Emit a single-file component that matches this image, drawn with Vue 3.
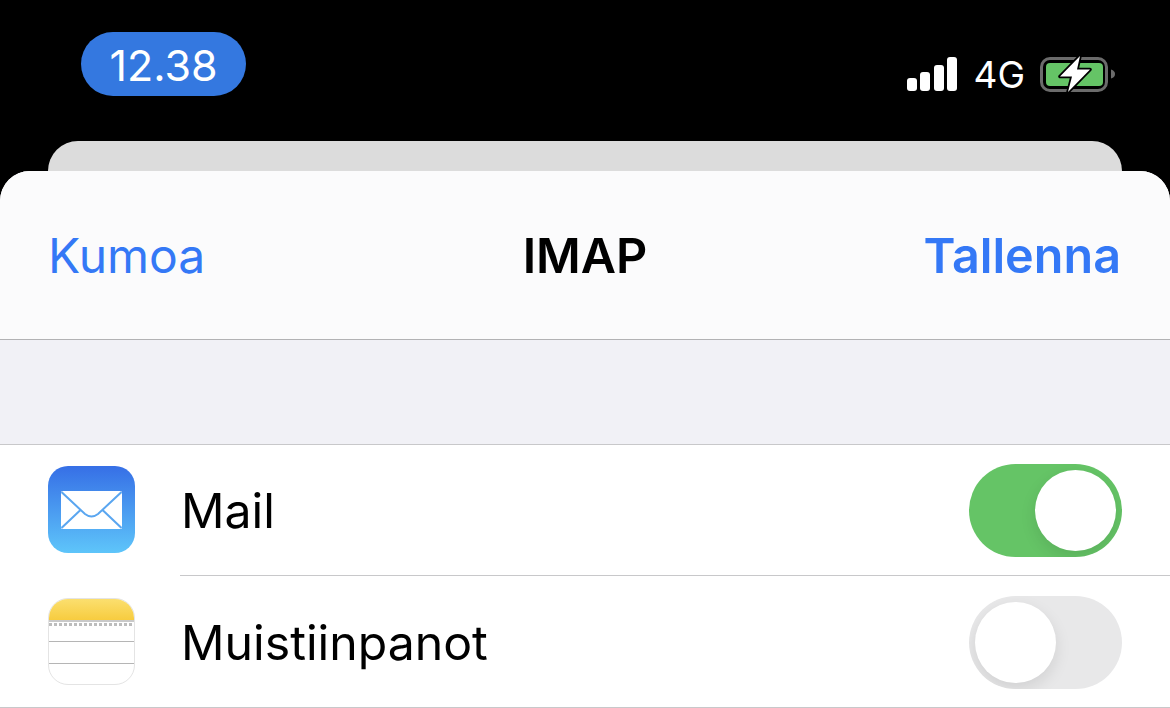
<template>
  <div class="screen">
    <!-- status bar -->
    <div class="status">
      <div class="clock">12.38</div>
      <div class="status-right">
        <div class="signal">
          <span v-for="h in bars" :key="h" class="signal-bar" :style="{ height: h + 'px' }" />
        </div>
        <span class="net">4G</span>
        <svg class="battery" width="76" height="38" viewBox="0 0 76 38">
          <rect x="1.500" y="3.500" width="65" height="32" rx="8.500" fill="none" stroke="#6b6b6b" stroke-width="3" />
          <rect x="6" y="8" width="57" height="23" rx="4" fill="#65c466" />
          <path d="M71 14.500 C74 15.500 75 17 75 19 C75 21 74 22.500 71 23.500 Z" fill="#6b6b6b" />
          <path d="M40 1 L20 21.500 L32 21.500 L28 37 L50 14.500 L37 14.500 Z" fill="#fff" stroke="#000" stroke-width="3.500" stroke-linejoin="round" paint-order="stroke" />
        </svg>
      </div>
    </div>

    <div class="back-card" />

    <div class="sheet">
      <div class="nav">
        <span class="nav-btn">Kumoa</span>
        <span class="nav-title">IMAP</span>
        <span class="nav-btn strong">Tallenna</span>
      </div>
      <div class="spacer" />
      <div class="list">
        <div class="row">
          <div class="app-icon mail">
            <svg width="61" height="38" viewBox="0 0 61 38">
              <rect width="61" height="38" rx="1.500" fill="#fff" />
              <path d="M0.500 1 L24 23 Q30.500 28 37 23 L60.500 1 M0.500 37 L20 18.500 M60.500 37 L41 18.500" fill="none" stroke="#5aa6f0" stroke-width="2" />
            </svg>
          </div>
          <span class="label">Mail</span>
          <div class="toggle on"><span class="knob" /></div>
        </div>
        <div class="row">
          <div class="app-icon notes">
            <div class="notes-head" />
            <div class="notes-dots" />
            <div class="notes-line first" />
            <div class="notes-line" />
          </div>
          <span class="label">Muistiinpanot</span>
          <div class="toggle"><span class="knob" /></div>
        </div>
      </div>
    </div>
  </div>
</template>

<script setup>
const bars = [13, 19, 26, 34]
</script>

<style>
html, body {
  margin: 0;
  background: #000;
}
</style>

<style scoped>
.screen {
  width: 1170px;
  height: 708px;
  overflow: hidden;
  background: #000;
  font-family: Inter, "Liberation Sans", sans-serif;
}

/* status bar */
.status {
  height: 141px;
  box-sizing: border-box;
  padding: 32px 54px 0 81px;
  display: flex;
  justify-content: space-between;
  align-items: flex-start;
}
.clock {
  width: 165px;
  height: 64px;
  border-radius: 32px;
  background: #3478e0;
  color: #fff;
  font-size: 43px;
  line-height: 66px;
  text-align: center;
}
.status-right {
  display: flex;
  align-items: center;
  margin-top: 21px;
  height: 42px;
}
.signal {
  display: flex;
  align-items: flex-end;
  gap: 3.670px;
  height: 34px;
}
.signal-bar {
  width: 10px;
  background: #fff;
  border-radius: 3px;
}
.net {
  color: #fff;
  font-size: 37px;
  margin-left: 16px;
  margin-right: 15px;
}

.back-card {
  height: 30px;
  margin: 0 48px;
  background: #dcdcdc;
  border-radius: 30px 30px 0 0;
}

.sheet {
  height: 537px;
  background: #fff;
  border-radius: 30px 30px 0 0;
  overflow: hidden;
}
.nav {
  height: 169px;
  box-sizing: border-box;
  padding: 0 49px 0 48px;
  background: #fbfbfc;
  border-bottom: 1px solid #b2b2b4;
  display: flex;
  align-items: center;
  justify-content: space-between;
  position: relative;
}
.nav-btn {
  color: #3478f6;
  font-size: 48px;
}
.nav-btn.strong {
  font-size: 48.500px;
  font-weight: 600;
}
.nav-title {
  position: absolute;
  left: 0;
  right: 0;
  text-align: center;
  font-size: 48.500px;
  font-weight: 600;
  color: #000;
}
.spacer {
  height: 104px;
  background: #f1f1f6;
  border-bottom: 1px solid #c8c8ca;
}

.row {
  height: 131px;
  display: flex;
  align-items: center;
  padding: 0 48px;
  position: relative;
}
.row:last-child {
  height: 132px;
}
.row::after {
  content: "";
  position: absolute;
  left: 180px;
  right: 0;
  bottom: 0;
  height: 1px;
  background: #c8c8ca;
}
.row:last-child::after {
  left: 0;
}
.label {
  margin-left: 46px;
  flex: 1;
  color: #000;
  font-size: 48.200px;
}

.app-icon {
  width: 87px;
  height: 87px;
  box-sizing: border-box;
  border-radius: 20px;
  overflow: hidden;
  flex-shrink: 0;
}
.mail {
  background: linear-gradient(#366fe6, #5ec5fa);
  display: flex;
  align-items: center;
  justify-content: center;
  margin-top: -2px;
}
.notes {
  background: #fff;
  border: 1px solid #e4e4e4;
  margin-top: -2px;
}
.notes-head {
  height: 21px;
  background: linear-gradient(#fbdf6f, #f7cc3f);
  border-bottom: 2px solid #c9c9c9;
}
.notes-dots {
  height: 3px;
  margin-top: 1px;
  background-image: linear-gradient(90deg, #bdbdbd 3px, transparent 3px);
  background-size: 5px 3px;
}
.notes-line {
  height: 1px;
  background: #b5b5b5;
  margin-top: 21px;
}
.notes-line.first {
  margin-top: 15px;
}

.toggle {
  width: 153px;
  height: 93px;
  border-radius: 47px;
  background: #e8e8e9;
  position: relative;
  flex-shrink: 0;
  overflow: hidden;
}
.toggle.on {
  background: #65c466;
}
.knob {
  position: absolute;
  top: 6px;
  left: 6px;
  width: 81px;
  height: 81px;
  border-radius: 50%;
  background: #fff;
  box-shadow: 0 6px 16px rgba(0, 0, 0, 0.1);
}
.toggle.on .knob {
  left: 66px;
}
</style>
